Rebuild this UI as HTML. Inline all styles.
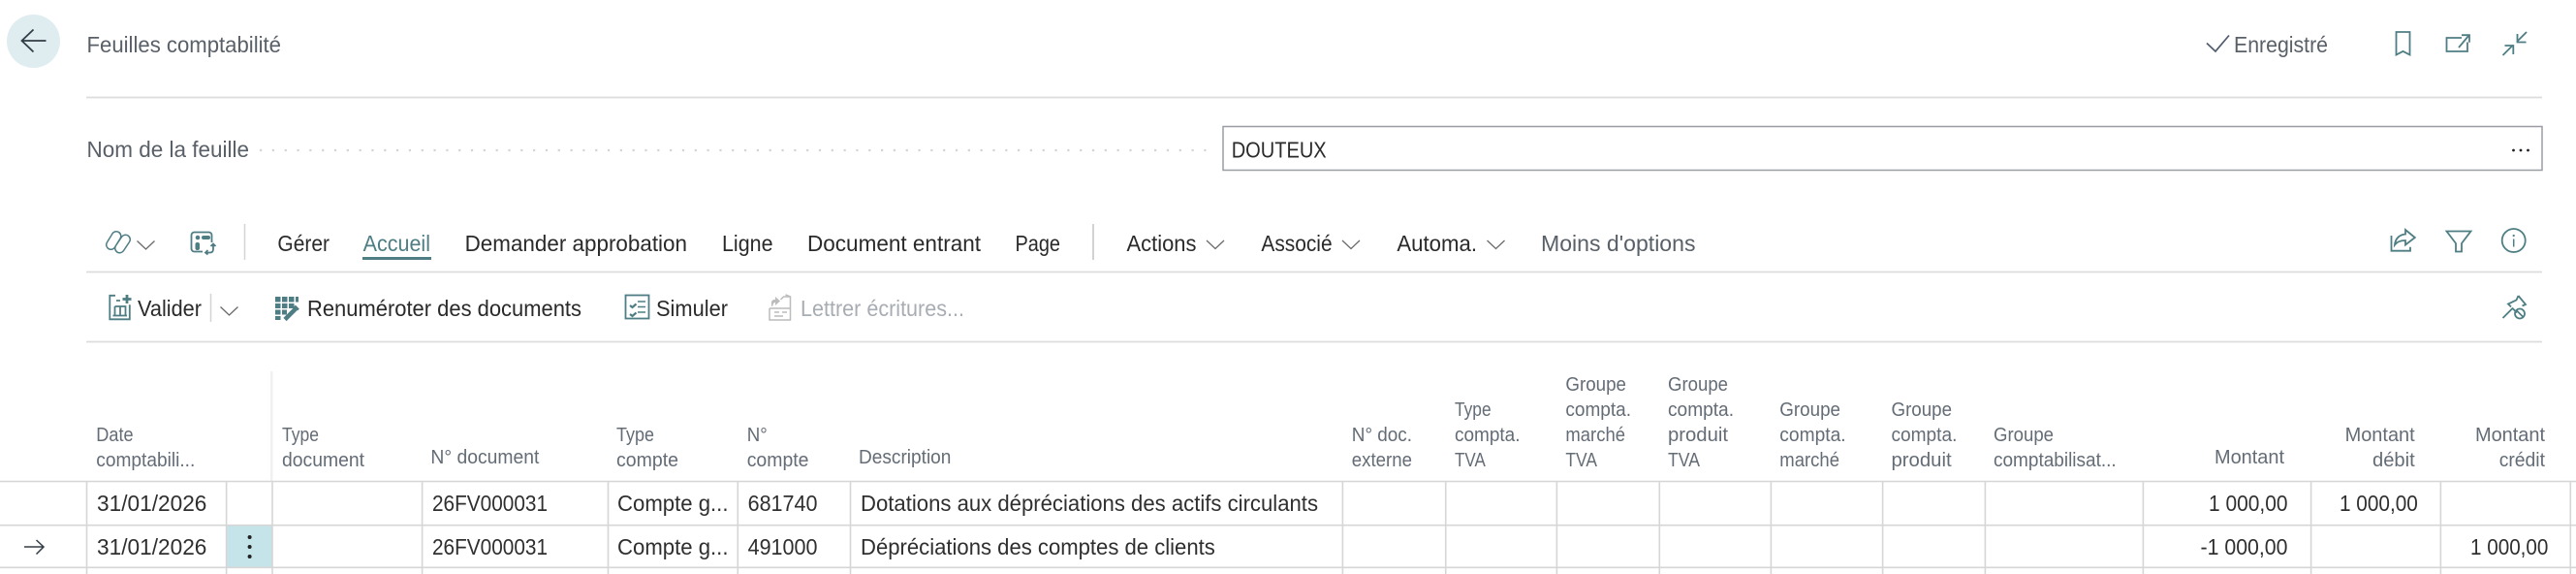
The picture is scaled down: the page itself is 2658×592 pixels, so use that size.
<!DOCTYPE html>
<html lang="fr">
<head>
<meta charset="utf-8">
<title>Feuilles comptabilité</title>
<style>
html,body{margin:0;padding:0;background:#fff;width:2658px;height:592px;overflow:hidden}
svg{display:block}
text{font-family:"Liberation Sans",sans-serif}
.d{font-size:23.5px;fill:#2a2a2a}
.g{font-size:23.5px;fill:#5a6068}
.t{font-size:23.5px;fill:#4e7e84}
.o{font-size:23.5px;fill:#a8adb3}
.h{font-size:20.5px;fill:#646c76}
.r{font-size:23.5px;fill:#2f2f2f}
.ic{fill:none;stroke:#4e7e84;stroke-width:1.8}
.chev{fill:none;stroke:#6a6a6a;stroke-width:1.3}
.grid line{stroke:#d6d6d6;stroke-width:1.6}
</style>
</head>
<body>
<svg width="2658" height="592" viewBox="0 0 2658 592" xmlns="http://www.w3.org/2000/svg">
<rect width="2658" height="592" fill="#fff"/>

<!-- back -->
<ellipse cx="34.500" cy="42.500" rx="27.500" ry="27.500" fill="#dfedf1"/>
<path d="M47.500 42H23M34.500 30.500 22.500 42l12 11.500" fill="none" stroke="#333d45" stroke-width="1.800"/>
<text class="g" x="89.500" y="54" textLength="200.500" lengthAdjust="spacingAndGlyphs">Feuilles comptabilité</text>

<!-- top right -->
<path d="M2277 44.500l9 8.500 14-16.500" fill="none" stroke="#505c6d" stroke-width="1.700"/>
<text class="g" x="2305" y="54" textLength="97" lengthAdjust="spacingAndGlyphs">Enregistré</text>
<path class="ic" d="M2472.500 33h14v23.500l-7-3.600-7 3.600z"/>
<path class="ic" d="M2540 39h-15.500v14h21.500v-9.500M2537 49l10.500-12.500M2540 36.200h8v7.500"/>
<path class="ic" d="M2607 33l-10 10M2597.500 35v8.500h9M2582.500 57l10.500-10.500M2584.500 47h8.800v9"/>

<line x1="89" y1="100.500" x2="2623" y2="100.500" stroke="#dcdcdc" stroke-width="1.700"/>

<!-- field -->
<text class="g" x="89.500" y="162" textLength="167.500" lengthAdjust="spacingAndGlyphs">Nom de la feuille</text>
<line x1="268" y1="155" x2="1246" y2="155" stroke="#d4d4d4" stroke-width="2.200" stroke-dasharray="2.200 10.620"/>
<rect x="1262" y="130.500" width="1361" height="45" fill="#fff" stroke="#9a9da1" stroke-width="1.500"/>
<text class="d" x="1270.700" y="162.300" textLength="98" lengthAdjust="spacingAndGlyphs">DOUTEUX</text>
<circle cx="2593.500" cy="155" r="1.400" fill="#212121"/><circle cx="2601" cy="155" r="1.400" fill="#212121"/><circle cx="2608.500" cy="155" r="1.400" fill="#212121"/>

<!-- action bar row 1 -->
<g fill="none" stroke-linecap="round">
<path d="M120 243.500L114.500 252.500" stroke="#4e7e84" stroke-width="11"/>
<path d="M120 243.500L114.500 252.500" stroke="#fff" stroke-width="8"/>
<path d="M129.500 247L123.500 256" stroke="#4e7e84" stroke-width="11"/>
<path d="M129.500 247L123.500 256" stroke="#fff" stroke-width="8"/>
</g>
<path class="chev" d="M141.500 248.500l9 8.500 9-8.500"/>
<rect class="ic" x="197.500" y="239.500" width="21" height="20" rx="3"/>
<circle cx="204" cy="245" r="2.300" fill="#4e7e84"/>
<rect x="208" y="243" width="9" height="4" rx="2" fill="#4e7e84"/>
<rect x="201.500" y="250" width="4.500" height="8" rx="2" fill="#4e7e84"/>
<rect x="209" y="250" width="14" height="13" fill="#fff"/>
<path class="ic" stroke-width="1.400" d="M220 257v-5M217.500 254l2.500-2.500 2.500 2.500M220 257c0 2.500-1.500 3.500-3 3.500h-5M214.500 258l-2.500 2.500 2.500 2"/>
<line x1="252.500" y1="231" x2="252.500" y2="268" stroke="#d4d4d4" stroke-width="1.500"/>

<text class="d" x="286.400" y="259" textLength="53.600" lengthAdjust="spacingAndGlyphs">Gérer</text>
<text class="t" x="374.600" y="259" textLength="69.400" lengthAdjust="spacingAndGlyphs">Accueil</text>
<rect x="374" y="265" width="71" height="3" fill="#4e7e84"/>
<text class="d" x="479.600" y="259" textLength="229.400" lengthAdjust="spacingAndGlyphs">Demander approbation</text>
<text class="d" x="745" y="259" textLength="52.500" lengthAdjust="spacingAndGlyphs">Ligne</text>
<text class="d" x="833" y="259" textLength="179" lengthAdjust="spacingAndGlyphs">Document entrant</text>
<text class="d" x="1047.500" y="259" textLength="46.500" lengthAdjust="spacingAndGlyphs">Page</text>
<line x1="1128" y1="231" x2="1128" y2="268" stroke="#c2c2c2" stroke-width="1.500"/>
<text class="d" x="1162.500" y="259" textLength="72" lengthAdjust="spacingAndGlyphs">Actions</text>
<path class="chev" d="M1245 248l9 8.500 9-8.500"/>
<text class="d" x="1301.400" y="259" textLength="73.200" lengthAdjust="spacingAndGlyphs">Associé</text>
<path class="chev" d="M1385 248l9 8.500 9-8.500"/>
<text class="d" x="1441.400" y="259" textLength="82.600" lengthAdjust="spacingAndGlyphs">Automa.</text>
<path class="chev" d="M1534.500 248l9 8.500 9-8.500"/>
<text class="g" x="1590" y="259" textLength="159.500" lengthAdjust="spacingAndGlyphs">Moins d'options</text>

<!-- right icons -->
<path class="ic" d="M2467.500 243v15.700h19.500v-4"/>
<path class="ic" d="M2482 237l9.800 8-9.800 7.500v-4.500c-5 0-8.500 1-11 4.500.5-6 4.500-10.500 11-11z"/>
<path class="ic" d="M2524.500 238.500h25l-9.500 12.500v8.500h-6V251z"/>
<circle class="ic" cx="2593.700" cy="248" r="12"/>
<path d="M2593.700 246.500v8" stroke="#4e7e84" stroke-width="1.500"/><circle cx="2593.700" cy="243" r="1.100" fill="#4e7e84"/>

<line x1="89" y1="280.500" x2="2623" y2="280.500" stroke="#dcdcdc" stroke-width="1.700"/>

<!-- action bar row 2 -->
<path class="ic" d="M119 304.800h-5.700v24.500h20.500v-15"/>
<path d="M131 304v9M126.500 308.500h9" stroke="#4e7e84" stroke-width="2.800"/>
<path class="ic" stroke-width="1.500" d="M120 310h4M118.500 316h11v9.500M118.500 316v9.500M124 316v9.500M116.500 325.500h14.500"/>
<text class="d" x="142" y="326" textLength="66" lengthAdjust="spacingAndGlyphs">Valider</text>
<line x1="217.500" y1="303" x2="217.500" y2="332" stroke="#d5d5d5" stroke-width="1.500"/>
<path class="chev" d="M227.500 316.500l9 8.500 9-8.500"/>

<g fill="#4e7e84">
<rect x="284" y="306" width="5.500" height="5.500"/><rect x="291" y="306" width="5.500" height="5.500"/><rect x="298" y="306" width="5.500" height="5.500"/><rect x="305" y="306" width="3" height="5.500"/>
<rect x="284" y="313" width="5.500" height="5"/><rect x="291" y="313" width="5.500" height="5"/><rect x="298" y="313" width="5.500" height="5"/>
<rect x="284" y="319.500" width="5.500" height="5"/><rect x="291" y="319.500" width="5" height="5"/>
<rect x="284" y="326" width="5.500" height="4"/>
</g>
<path d="M294 329.500l12-12" stroke="#4e7e84" stroke-width="4.500"/>
<path d="M304 315.500l4 4" stroke="#4e7e84" stroke-width="2.500"/>
<text class="d" x="317" y="326" textLength="283" lengthAdjust="spacingAndGlyphs">Renuméroter des documents</text>

<rect class="ic" x="645.500" y="304.500" width="24" height="24"/>
<path d="M658 311h8M658 316.500h8M658 322h8" stroke="#4e7e84" stroke-width="1.500"/>
<path d="M650 315l2.500 2 4-3.500M650 324l2.500 2 4-3.500" fill="none" stroke="#4e7e84" stroke-width="2.200"/>
<text class="d" x="677" y="326" textLength="74" lengthAdjust="spacingAndGlyphs">Simuler</text>

<path d="M794 318v12h21.500v-24h-7l-3 3M815.500 306l-5-2M794 318h21.500M799 322h5M807 322h5M799 326h9" fill="none" stroke="#bcbcbc" stroke-width="1.500"/>
<path d="M796 316l0-4c0-2 1.500-3 4-3v-3l5 4.500-5 4.500v-3c-1.500 0-2.500 1-2.500 3.500z" fill="#bcbcbc"/>
<text class="o" x="826" y="326" textLength="169" lengthAdjust="spacingAndGlyphs">Lettrer écritures...</text>

<!-- pin -->
<path class="ic" d="M2582.500 328l10-10M2598.500 305l7.500 9-3.500 1.500M2598.500 305l-2 4.500-8.500 4 3 3M2597 322.500l-5-5"/>
<circle class="ic" stroke-width="1.700" cx="2600" cy="323.500" r="5"/>
<path d="M2596.500 320l7 7" stroke="#4e7e84" stroke-width="1.700"/>

<line x1="89" y1="352.500" x2="2623" y2="352.500" stroke="#dcdcdc" stroke-width="1.700"/>

<!-- grid -->
<rect x="279" y="383" width="2.500" height="113" fill="#f0f0f0"/>
<rect x="234" y="542" width="47" height="43" fill="#c4e4e9"/>
<g class="grid">
<line x1="0" y1="496.500" x2="2658" y2="496.500"/>
<line x1="0" y1="541.700" x2="2658" y2="541.700"/>
<line x1="0" y1="585.300" x2="2658" y2="585.300"/>
<line x1="89.500" y1="496" x2="89.500" y2="592"/>
<line x1="233.600" y1="496" x2="233.600" y2="592"/>
<line x1="281" y1="496" x2="281" y2="592"/>
<line x1="435.600" y1="496" x2="435.600" y2="592"/>
<line x1="627.500" y1="496" x2="627.500" y2="592"/>
<line x1="761.300" y1="496" x2="761.300" y2="592"/>
<line x1="877.500" y1="496" x2="877.500" y2="592"/>
<line x1="1385.400" y1="496" x2="1385.400" y2="592"/>
<line x1="1491.700" y1="496" x2="1491.700" y2="592"/>
<line x1="1606.400" y1="496" x2="1606.400" y2="592"/>
<line x1="1712.300" y1="496" x2="1712.300" y2="592"/>
<line x1="1827.400" y1="496" x2="1827.400" y2="592"/>
<line x1="1942.600" y1="496" x2="1942.600" y2="592"/>
<line x1="2048.400" y1="496" x2="2048.400" y2="592"/>
<line x1="2211.400" y1="496" x2="2211.400" y2="592"/>
<line x1="2384.600" y1="496" x2="2384.600" y2="592"/>
<line x1="2518.400" y1="496" x2="2518.400" y2="592"/>
<line x1="2652.300" y1="496" x2="2652.300" y2="592"/>
</g>

<!-- headers -->
<text class="h" x="99.300" y="455" textLength="38.300" lengthAdjust="spacingAndGlyphs">Date</text>
<text class="h" x="99.300" y="481" textLength="102" lengthAdjust="spacingAndGlyphs">comptabili...</text>
<text class="h" x="291" y="455" textLength="38" lengthAdjust="spacingAndGlyphs">Type</text>
<text class="h" x="291" y="481" textLength="85" lengthAdjust="spacingAndGlyphs">document</text>
<text class="h" x="444.400" y="478" textLength="112" lengthAdjust="spacingAndGlyphs">N° document</text>
<text class="h" x="636" y="455" textLength="39" lengthAdjust="spacingAndGlyphs">Type</text>
<text class="h" x="636" y="481" textLength="64" lengthAdjust="spacingAndGlyphs">compte</text>
<text class="h" x="770.700" y="455" textLength="21" lengthAdjust="spacingAndGlyphs">N°</text>
<text class="h" x="770.700" y="481" textLength="63.800" lengthAdjust="spacingAndGlyphs">compte</text>
<text class="h" x="886" y="478" textLength="95.400" lengthAdjust="spacingAndGlyphs">Description</text>
<text class="h" x="1394.800" y="455" textLength="62.200" lengthAdjust="spacingAndGlyphs">N° doc.</text>
<text class="h" x="1394.800" y="481" textLength="62.200" lengthAdjust="spacingAndGlyphs">externe</text>
<text class="h" x="1501" y="429" textLength="37.600" lengthAdjust="spacingAndGlyphs">Type</text>
<text class="h" x="1501" y="455" textLength="67.500" lengthAdjust="spacingAndGlyphs">compta.</text>
<text class="h" x="1501" y="481" textLength="31.800" lengthAdjust="spacingAndGlyphs">TVA</text>
<text class="h" x="1615.400" y="403" textLength="62.600" lengthAdjust="spacingAndGlyphs">Groupe</text>
<text class="h" x="1615.400" y="429" textLength="67.600" lengthAdjust="spacingAndGlyphs">compta.</text>
<text class="h" x="1615.400" y="455" textLength="61.600" lengthAdjust="spacingAndGlyphs">marché</text>
<text class="h" x="1615.400" y="481" textLength="32.600" lengthAdjust="spacingAndGlyphs">TVA</text>
<text class="h" x="1721" y="403" textLength="62" lengthAdjust="spacingAndGlyphs">Groupe</text>
<text class="h" x="1721" y="429" textLength="68" lengthAdjust="spacingAndGlyphs">compta.</text>
<text class="h" x="1721" y="455" textLength="62" lengthAdjust="spacingAndGlyphs">produit</text>
<text class="h" x="1721" y="481" textLength="33" lengthAdjust="spacingAndGlyphs">TVA</text>
<text class="h" x="1836.300" y="429" textLength="62.700" lengthAdjust="spacingAndGlyphs">Groupe</text>
<text class="h" x="1836.300" y="455" textLength="68.300" lengthAdjust="spacingAndGlyphs">compta.</text>
<text class="h" x="1836.300" y="481" textLength="61.700" lengthAdjust="spacingAndGlyphs">marché</text>
<text class="h" x="1951.500" y="429" textLength="62.500" lengthAdjust="spacingAndGlyphs">Groupe</text>
<text class="h" x="1951.500" y="455" textLength="67.900" lengthAdjust="spacingAndGlyphs">compta.</text>
<text class="h" x="1951.500" y="481" textLength="62.100" lengthAdjust="spacingAndGlyphs">produit</text>
<text class="h" x="2057" y="455" textLength="62" lengthAdjust="spacingAndGlyphs">Groupe</text>
<text class="h" x="2057" y="481" textLength="126.700" lengthAdjust="spacingAndGlyphs">comptabilisat...</text>
<text class="h" x="2285" y="478" textLength="72" lengthAdjust="spacingAndGlyphs">Montant</text>
<text class="h" x="2419.600" y="455" textLength="72.100" lengthAdjust="spacingAndGlyphs">Montant</text>
<text class="h" x="2448" y="481" textLength="43.700" lengthAdjust="spacingAndGlyphs">débit</text>
<text class="h" x="2554" y="455" textLength="72" lengthAdjust="spacingAndGlyphs">Montant</text>
<text class="h" x="2578.700" y="481" textLength="47.300" lengthAdjust="spacingAndGlyphs">crédit</text>

<!-- row 1 -->
<text class="r" x="100" y="527" textLength="113.400" lengthAdjust="spacingAndGlyphs">31/01/2026</text>
<text class="r" x="446" y="527" textLength="119" lengthAdjust="spacingAndGlyphs">26FV000031</text>
<text class="r" x="637" y="527" textLength="114.500" lengthAdjust="spacingAndGlyphs">Compte g...</text>
<text class="r" x="771.600" y="527" textLength="71.900" lengthAdjust="spacingAndGlyphs">681740</text>
<text class="r" x="888" y="527" textLength="472" lengthAdjust="spacingAndGlyphs">Dotations aux dépréciations des actifs circulants</text>
<text class="r" x="2279" y="527" textLength="81.500" lengthAdjust="spacingAndGlyphs">1 000,00</text>
<text class="r" x="2414" y="527" textLength="80.800" lengthAdjust="spacingAndGlyphs">1 000,00</text>

<!-- row 2 -->
<path d="M25 564h20M37.500 557l7.500 7-7.500 7.500" fill="none" stroke="#333d45" stroke-width="1.500"/>
<text class="r" x="100" y="572" textLength="113.400" lengthAdjust="spacingAndGlyphs">31/01/2026</text>
<circle cx="257.600" cy="554" r="2" fill="#212121"/><circle cx="257.600" cy="564" r="2" fill="#212121"/><circle cx="257.600" cy="574" r="2" fill="#212121"/>
<text class="r" x="446" y="572" textLength="119" lengthAdjust="spacingAndGlyphs">26FV000031</text>
<text class="r" x="637" y="572" textLength="114.500" lengthAdjust="spacingAndGlyphs">Compte g...</text>
<text class="r" x="771.600" y="572" textLength="71.900" lengthAdjust="spacingAndGlyphs">491000</text>
<text class="r" x="888" y="572" textLength="365.800" lengthAdjust="spacingAndGlyphs">Dépréciations des comptes de clients</text>
<text class="r" x="2270.500" y="572" textLength="90" lengthAdjust="spacingAndGlyphs">-1 000,00</text>
<text class="r" x="2549" y="572" textLength="80.400" lengthAdjust="spacingAndGlyphs">1 000,00</text>
</svg>
</body>
</html>
